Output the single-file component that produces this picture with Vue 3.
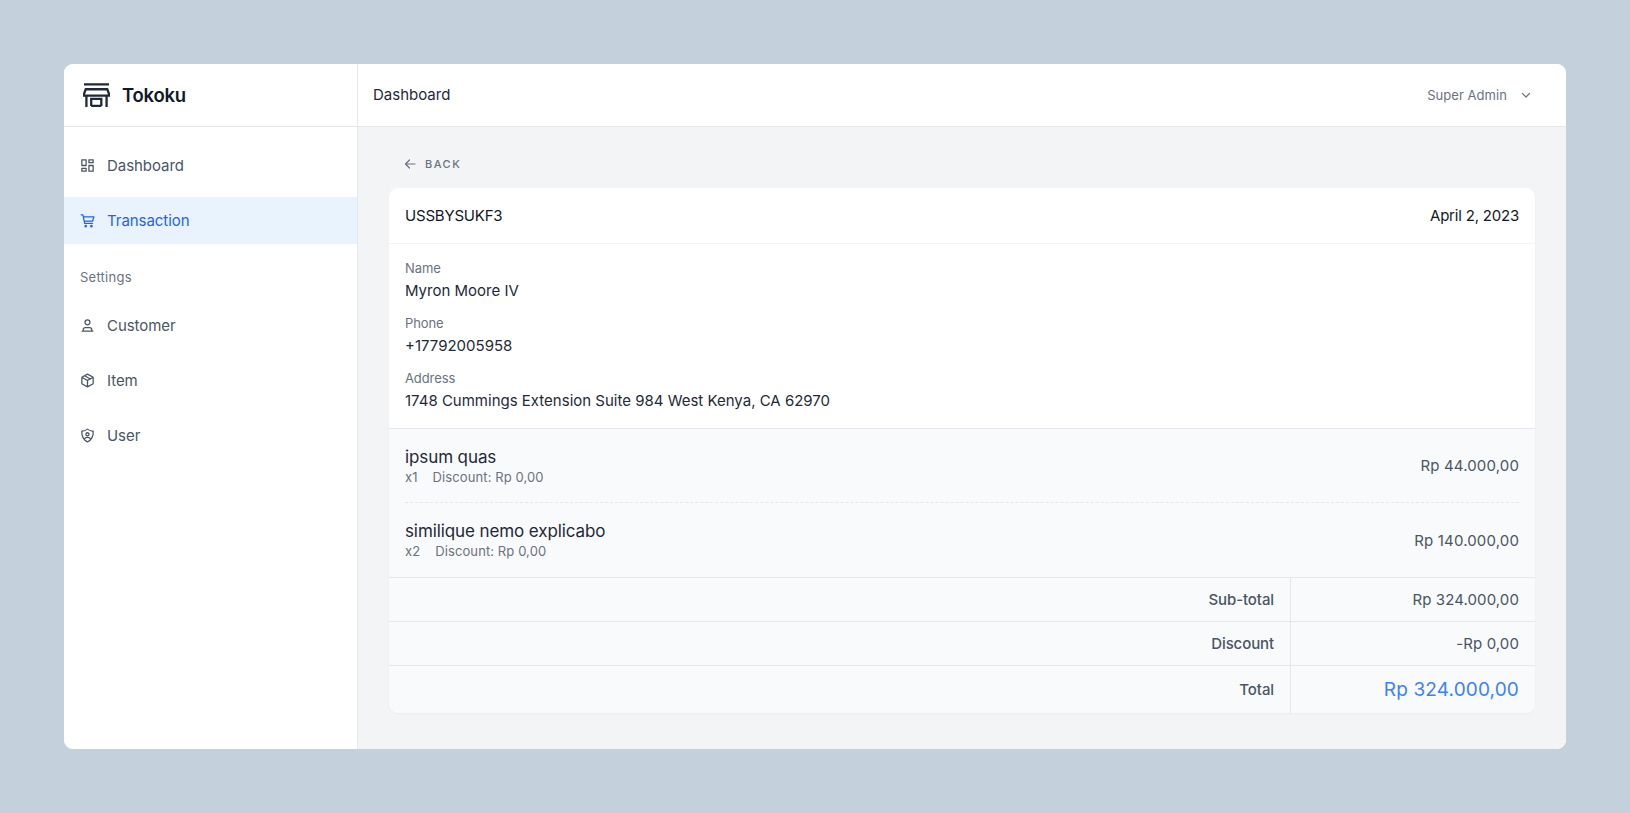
<script setup>
const nav = [
  { label: 'Dashboard', icon: 'dash' },
  { label: 'Transaction', icon: 'cart', active: true }
]
const settings = [
  { label: 'Customer', icon: 'user' },
  { label: 'Item', icon: 'box' },
  { label: 'User', icon: 'shield' }
]
const fields = [
  { k: 'Name', v: 'Myron Moore IV' },
  { k: 'Phone', v: '+17792005958' },
  { k: 'Address', v: '1748 Cummings Extension Suite 984 West Kenya, CA 62970' }
]
const items = [
  { name: 'ipsum quas', qty: 'x1', price: 'Rp 44.000,00' },
  { name: 'similique nemo explicabo', qty: 'x2', price: 'Rp 140.000,00' }
]
const paths = {
  dash: 'M4 4h6v8H4zM14 4h6v4h-6zM4 16h6v4H4zM14 12h6v8h-6z',
  cart: 'M3 4h2.500l2.500 12h11M6.200 7H21l-1.800 6H7.500M9.500 21a1 1 0 1 0 0-2 1 1 0 0 0 0 2zM17.500 21a1 1 0 1 0 0-2 1 1 0 0 0 0 2z',
  user: 'M12 11a3.500 3.500 0 1 0 0-7 3.500 3.500 0 0 0 0 7zM6 20v-2a3 3 0 0 1 3-3h6a3 3 0 0 1 3 3v2zM4.500 20h15',
  box: 'M12 3l8 4.500v9L12 21l-8-4.500v-9zM12 12l8-4.500M12 12v9M12 12L4 7.500M8 5.300l8 4.600',
  shield: 'M12 3c2.500 2 5 2.800 8 3 .4 6.500-1.800 12-8 15C5.800 18 3.600 12.500 4 6c3-.2 5.500-1 8-3zM12 12.500a2.200 2.200 0 1 0 0-4.400 2.200 2.200 0 0 0 0 4.400zM7.800 17c.6-1.700 2.200-2.500 4.200-2.500s3.600.8 4.200 2.500'
}
</script>

<template>
  <div class="page">
    <div class="frame">
      <aside class="side">
        <div class="brand">
          <svg class="logo" viewBox="0 0 28 25" fill="none" stroke="#1f2937" stroke-width="2.400">
            <path d="M1 1.500h26M2.800 6.500h22.400L27 11.200v2H1v-2zM3.500 13V25M24.500 13V25M8.500 23.800h10.500M19 24V16.500H8.500V24" />
          </svg>
          <span>Tokoku</span>
        </div>
        <nav class="nav">
          <a v-for="n in nav" :key="n.label" class="nav-item" :class="{ active: n.active }">
            <svg class="ico" viewBox="0 0 24 24" fill="none" stroke="currentColor" stroke-width="1.800" stroke-linejoin="round" stroke-linecap="round"><path :d="paths[n.icon]" /></svg>
            {{ n.label }}
          </a>
          <div class="group">Settings</div>
          <a v-for="n in settings" :key="n.label" class="nav-item">
            <svg class="ico" viewBox="0 0 24 24" fill="none" stroke="currentColor" stroke-width="1.800" stroke-linejoin="round" stroke-linecap="round"><path :d="paths[n.icon]" /></svg>
            {{ n.label }}
          </a>
        </nav>
      </aside>
      <div class="main">
        <header class="top">
          <span class="title">Dashboard</span>
          <span class="account">
            Super Admin
            <svg class="chev" viewBox="0 0 12 12" fill="none" stroke="currentColor" stroke-width="1.200" stroke-linecap="round" stroke-linejoin="round"><path d="M2.500 4.500L6 8l3.500-3.500" /></svg>
          </span>
        </header>
        <section class="content">
          <a class="back">
            <svg class="back-ico" viewBox="0 0 12 12" fill="none" stroke="currentColor" stroke-width="1.200" stroke-linecap="round" stroke-linejoin="round"><path d="M11 6H1.500M5.500 2L1.500 6l4 4" /></svg>
            BACK
          </a>
          <div class="card">
            <div class="card-head">
              <span>USSBYSUKF3</span>
              <span>April 2, 2023</span>
            </div>
            <div class="details">
              <div v-for="f in fields" :key="f.k" class="field">
                <div class="k">{{ f.k }}</div>
                <div class="v">{{ f.v }}</div>
              </div>
            </div>
            <div class="items">
              <div v-for="it in items" :key="it.name" class="item">
                <div>
                  <div class="item-name">{{ it.name }}</div>
                  <div class="item-meta"><span>{{ it.qty }}</span><span>Discount: Rp 0,00</span></div>
                </div>
                <div class="price">{{ it.price }}</div>
              </div>
            </div>
            <div class="sum">
              <div class="sum-l">Sub-total</div><div class="sum-r">Rp 324.000,00</div>
            </div>
            <div class="sum">
              <div class="sum-l">Discount</div><div class="sum-r">-Rp 0,00</div>
            </div>
            <div class="sum total">
              <div class="sum-l">Total</div><div class="sum-r">Rp 324.000,00</div>
            </div>
          </div>
        </section>
      </div>
    </div>
  </div>
</template>

<style>
html, body { margin: 0; background: #c4d0dc; }
</style>

<style scoped>
.page {
  box-sizing: border-box;
  height: 813px;
  padding: 64px;
  font-family: Inter, "Noto Sans", sans-serif;
  letter-spacing: -0.25px;
  background: #c4d0dc;
}
.frame {
  display: flex;
  height: 685px;
  border-radius: 9px;
  overflow: hidden;
  background: #fff;
}
.side {
  box-sizing: border-box;
  flex: 0 0 294px;
  border-right: 1px solid #e5e7eb;
  background: #fff;
}
.brand {
  box-sizing: border-box;
  height: 63px;
  display: flex;
  align-items: center;
  gap: 12px;
  padding-left: 19px;
  border-bottom: 1px solid #e5e7eb;
  font-size: 18.500px;
  font-weight: 600;
  color: #111827;
}
.logo { width: 27px; height: 24px; }
.nav { padding-top: 15px; }
.nav-item {
  height: 47px;
  margin-bottom: 8px;
  display: flex;
  align-items: center;
  gap: 11px;
  padding-left: 15px;
  font-size: 15px;
  letter-spacing: -0.05px;
  color: #4b5563;
}
.nav-item.active { background: #e8f3fd; color: #2563eb; }
.ico { width: 17px; height: 17px; flex: none; }
.group {
  height: 50px;
  margin-top: -8px;
  margin-bottom: 0;
  padding: 8px 0 0 16px;
  box-sizing: content-box;
  line-height: 50px;
  font-size: 13px;
  letter-spacing: 0.25px;
  color: #6b7280;
}
.main { flex: 1; display: flex; flex-direction: column; min-width: 0; }
.top {
  box-sizing: border-box;
  height: 63px;
  display: flex;
  align-items: center;
  justify-content: space-between;
  padding: 0 34px 1px 15px;
  background: #fff;
  border-bottom: 1px solid #e5e7eb;
}
.title { font-size: 15px; font-weight: 400; letter-spacing: 0; color: #1f2937; }
.account { display: flex; align-items: center; gap: 13px; font-size: 13px; letter-spacing: 0.05px; color: #6b7280; }
.chev { width: 12px; height: 12px; }
.content { flex: 1; padding: 28px 31px 0; background: #f3f4f6; }
.back {
  height: 17px;
  display: flex;
  align-items: center;
  gap: 9px;
  padding-left: 15px;
  font-size: 11px;
  font-weight: 500;
  letter-spacing: 1.500px;
  color: #6b7280;
}
.back-ico { width: 12px; height: 12px; }
.card {
  margin-top: 16px;
  border-radius: 9px;
  background: #fff;
  overflow: hidden;
  box-shadow: 0 1px 2px rgba(0, 0, 0, 0.04);
}
.card-head {
  box-sizing: border-box;
  height: 56px;
  display: flex;
  align-items: center;
  justify-content: space-between;
  padding: 0 16px 1px;
  font-size: 15px;
  letter-spacing: -0.2px;
  color: #111827;
  border-bottom: 1px solid #f3f4f6;
}
.details {
  box-sizing: border-box;
  height: 185px;
  padding: 14px 16px 0;
  border-bottom: 1px solid #e5e7eb;
}
.field { height: 55px; }
.k { font-size: 13px; line-height: 21px; letter-spacing: -0.1px; color: #6b7280; }
.v { font-size: 15px; line-height: 24px; letter-spacing: 0; color: #1f2937; }
.items { padding: 0 16px; background: #f9fafb; }
.item {
  box-sizing: border-box;
  height: 74px;
  display: flex;
  align-items: center;
  justify-content: space-between;
  border-bottom: 1px dashed #e5e7eb;
}
.item:last-child { height: 74px; border-bottom: 0; }
.item-name { font-size: 17px; line-height: 22px; letter-spacing: -0.1px; color: #1f2937; }
.item-meta { display: flex; gap: 15px; font-size: 13px; line-height: 18px; letter-spacing: 0.1px; color: #6b7280; }
.price { font-size: 15px; letter-spacing: 0.15px; color: #4b5563; }
.sum {
  box-sizing: border-box;
  height: 44px;
  display: grid;
  grid-template-columns: 902px 1fr;
  background: #f9fafb;
  border-top: 1px solid #e5e7eb;
  font-size: 15px;
  color: #4b5563;
}
.sum-l, .sum-r { display: flex; align-items: center; justify-content: flex-end; padding: 0 16px; }
.sum-l { border-right: 1px solid #e5e7eb; font-weight: 500; letter-spacing: -0.1px; }
.sum-r { letter-spacing: 0.1px; }
.total { height: 48px; }
.total .sum-r { font-size: 19px; letter-spacing: 0.15px; color: #3b82f6; }
</style>
